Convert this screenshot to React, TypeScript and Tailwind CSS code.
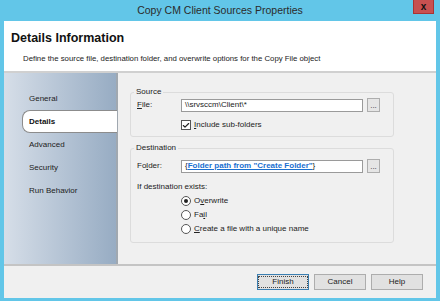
import { Check } from "lucide-react";

const font = { fontFamily: '"Liberation Sans", Arial, sans-serif' };

function NavItem({ label, active }: { label: string; active?: boolean }) {
  if (active) {
    return (
      <div className="ml-[18px] -mr-[1px] h-[23px] flex items-center pl-[6px] bg-white border border-r-0 border-[#8c8c8c] rounded-l-[8px] font-bold text-[#111]">
        {label}
      </div>
    );
  }
  return <div className="h-[23px] flex items-center pl-[25px] text-[#222]">{label}</div>;
}

function Browse() {
  return (
    <div className="w-[13px] h-[14px] border border-[#adadad] bg-[#e5e5e5] flex items-end justify-center text-[8px] leading-[10px] text-[#333]">
      ...
    </div>
  );
}

function Radio({ label, checked, u }: { label: string; checked?: boolean; u: number }) {
  return (
    <div className="flex items-center gap-[3px] h-[14px]">
      <div className="w-[10px] h-[10px] rounded-full border border-[#555] bg-white flex items-center justify-center">
        {checked && <div className="w-[4px] h-[4px] rounded-full bg-[#222]" />}
      </div>
      <span>
        {label.slice(0, u)}
        <span className="underline">{label[u]}</span>
        {label.slice(u + 1)}
      </span>
    </div>
  );
}

export default function App() {
  return (
    <div style={font} className="relative w-[440px] h-[301px] bg-[#62c6e8] px-[4px] pb-[3px] flex flex-col text-[8px] text-[#222]">
      <div className="h-[21px] flex items-center justify-center text-[10.5px] text-[#2b2b2b]">
        Copy CM Client Sources Properties
      </div>
      <div className="absolute top-0 right-[6px] w-[21px] h-[14px] bg-[#c75050] border border-[#a33] border-t-0 flex items-center justify-center text-[10px] leading-[10px] font-bold text-[#111]">
        x
      </div>

      <div className="flex-1 flex flex-col bg-[#f0f0f0]">
        <div className="h-[52px] bg-white border-b-2 border-[#d0d0d0] pl-[7px] pt-[8px]">
          <div className="text-[12.5px] font-bold text-[#111]">Details Information</div>
          <div className="pl-[12px] pt-[5px] text-[7.8px] text-[#222]">
            Define the source file, destination folder, and overwrite options for the Copy File object
          </div>
        </div>

        <div className="flex-1 flex border-b-2 border-[#c4c4c4]">
          <div className="w-[114px] bg-gradient-to-r from-[#d6dee8] to-[#97acc3] border-r-2 border-[#a0a8b0] pt-[14px] flex flex-col">
            <NavItem label="General" />
            <NavItem label="Details" active />
            <NavItem label="Advanced" />
            <NavItem label="Security" />
            <NavItem label="Run Behavior" />
          </div>

          <div className="flex-1 pl-[12px] pt-[13px] flex flex-col gap-[5px]">
            <fieldset className="w-[264px] border border-[#dcdcdc] rounded-[3px] px-[6px] pb-[5px] pt-0">
              <legend className="px-[2px] -ml-[3px] text-[#222]">Source</legend>
              <div className="flex items-center h-[14px]">
                <span className="w-[44px]">
                  <span className="underline">F</span>ile:
                </span>
                <div className="w-[182px] h-[13px] bg-white border border-[#9a9a9a] flex items-center pl-[3px]">
                  \\srvsccm\Client\*
                </div>
                <div className="ml-[4px]">
                  <Browse />
                </div>
              </div>
              <div className="flex items-center gap-[3px] ml-[44px] mt-[7px]">
                <div className="w-[10px] h-[10px] border border-[#555] bg-white flex items-center justify-center">
                  <Check size={9} strokeWidth={3.5} className="text-[#222]" />
                </div>
                <span>
                  <span className="underline">I</span>nclude sub-folders
                </span>
              </div>
            </fieldset>

            <fieldset className="w-[264px] border border-[#dcdcdc] rounded-[3px] px-[6px] pb-[6px] pt-0">
              <legend className="px-[2px] -ml-[3px] text-[#222]">Destination</legend>
              <div className="flex items-center h-[14px] mt-[5px]">
                <span className="w-[44px]">
                  Fo<span className="underline">l</span>der:
                </span>
                <div className="w-[182px] h-[13px] bg-white border border-[#9a9a9a] flex items-center pl-[3px]">
                  {"{"}
                  <span className="text-[#1a6fd0] font-bold underline">Folder path from "Create Folder"</span>
                  {"}"}
                </div>
                <div className="ml-[4px]">
                  <Browse />
                </div>
              </div>
              <div className="mt-[8px]">If destination exists:</div>
              <div className="ml-[44px] mt-[1px] flex flex-col">
                <Radio label="Overwrite" checked u={1} />
                <Radio label="Fail" u={2} />
                <Radio label="Create a file with a unique name" u={0} />
              </div>
            </fieldset>
          </div>
        </div>

        <div className="h-[32px] flex items-center justify-end gap-[5px] pr-[13px]">
          <button className="w-[52px] h-[16px] border border-[#3c7fb1] bg-[#e1e1e1] flex items-center justify-center">
            <span className="border border-dotted border-[#444] px-[13px] leading-[10px]">Finish</span>
          </button>
          <button className="w-[52px] h-[16px] border border-[#adadad] bg-[#e1e1e1]">Cancel</button>
          <button className="w-[52px] h-[16px] border border-[#adadad] bg-[#e1e1e1]">Help</button>
        </div>
      </div>
    </div>
  );
}
